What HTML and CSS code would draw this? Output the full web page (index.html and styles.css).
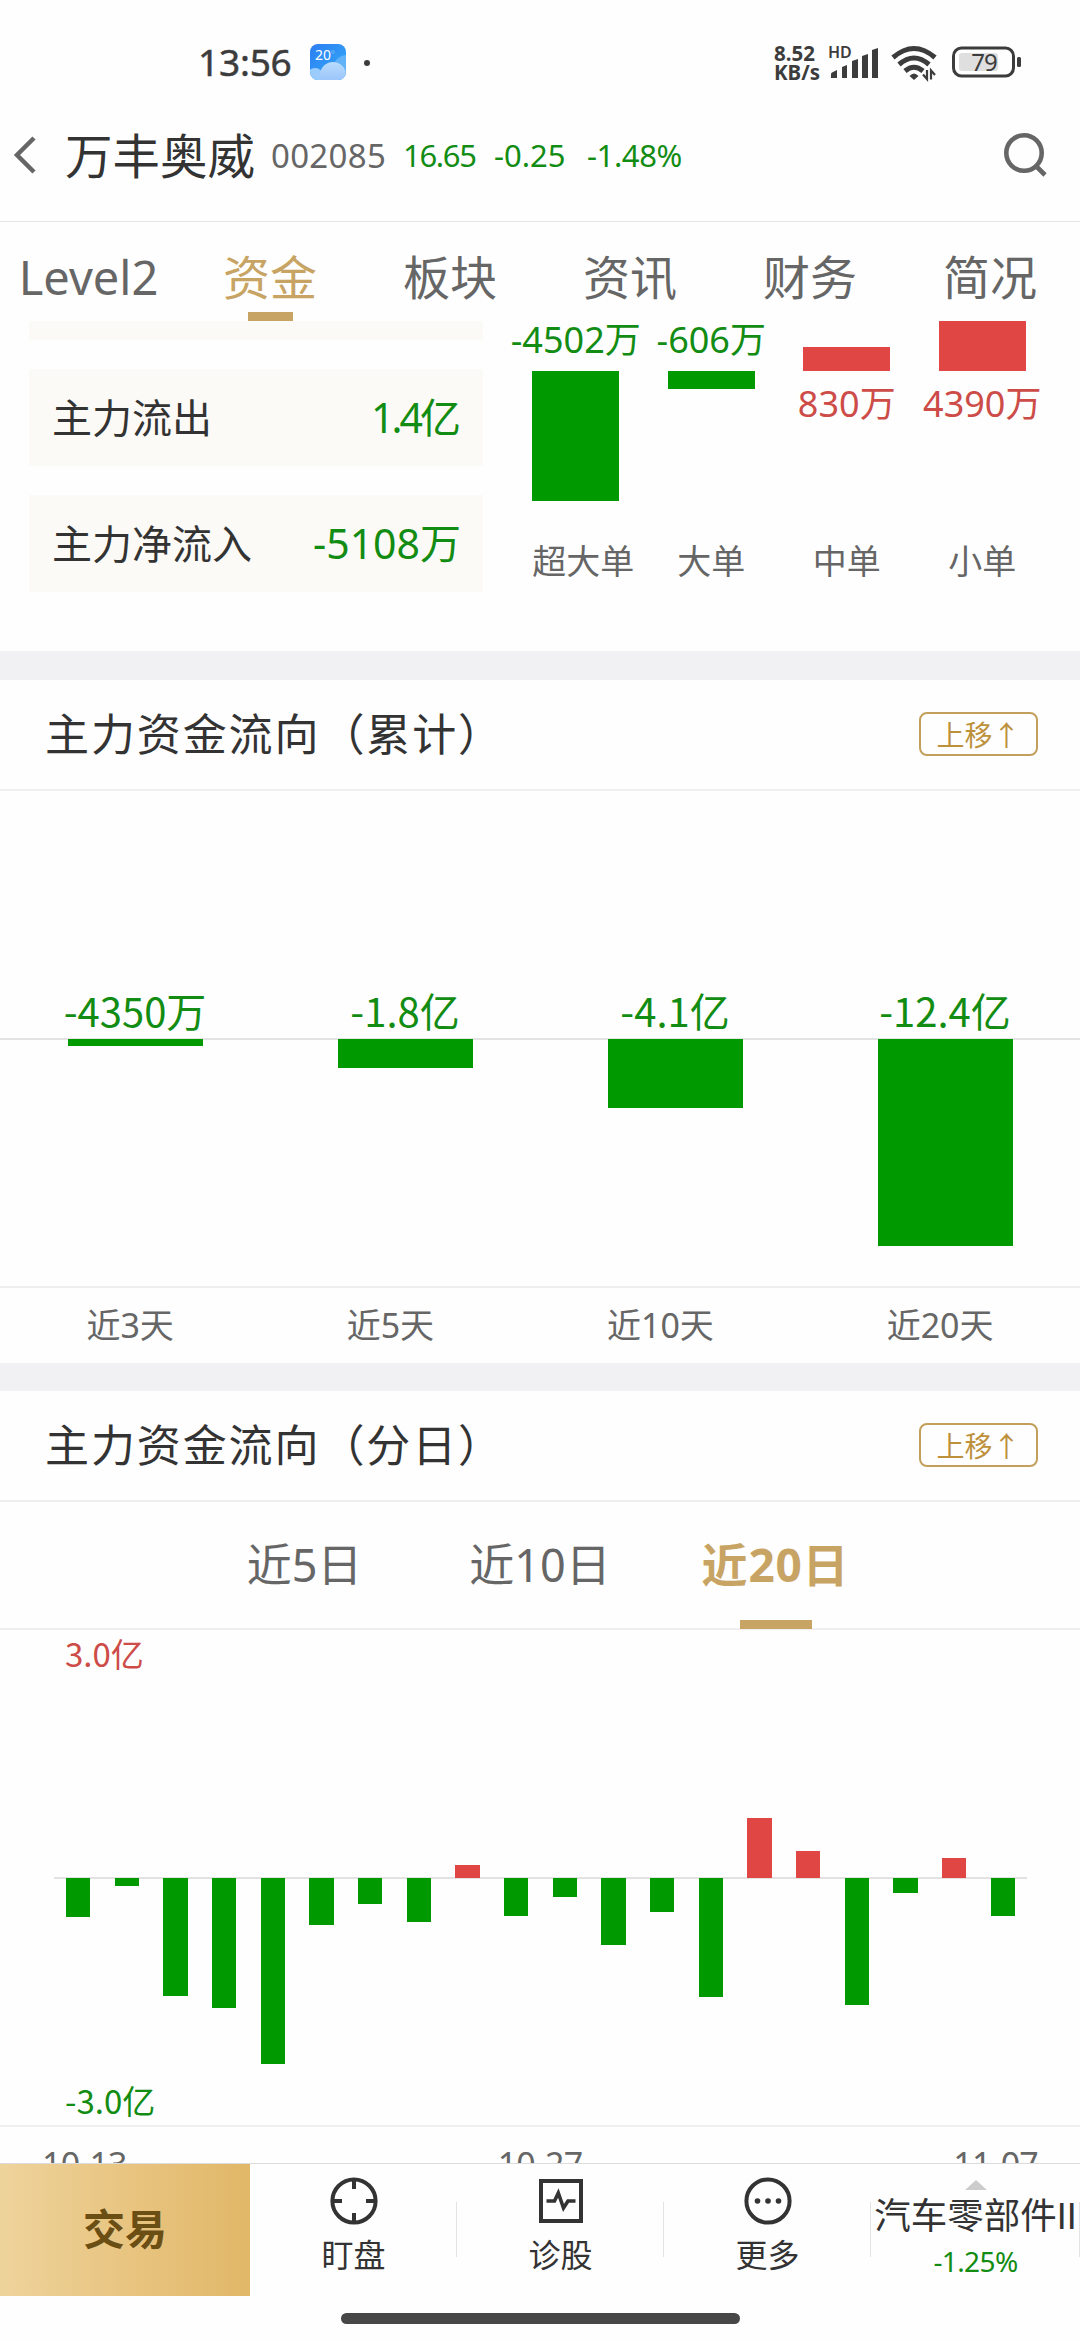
FILE: index.html
```html
<!DOCTYPE html>
<html lang="zh-CN">
<head>
<meta charset="utf-8">
<title>万丰奥威 002085</title>
<link rel="stylesheet" href="styles.css">
</head>
<body>
<div class="screen">
  <div class="status">
    <span class="clock">13:56</span>
    <svg class="weather" width="36" height="36" viewBox="0 0 36 36">
      <defs>
        <linearGradient id="sky" x1="0" y1="0" x2="1" y2="1"><stop offset="0" stop-color="#2c7df2"/><stop offset="1" stop-color="#35aef8"/></linearGradient>
        <linearGradient id="cloud" x1="0" y1="0" x2="0" y2="1"><stop offset="0" stop-color="#b9dcfd"/><stop offset="1" stop-color="#8fbcfa"/></linearGradient>
        <clipPath id="tile"><rect width="36" height="36" rx="8"/></clipPath>
      </defs>
      <g clip-path="url(#tile)">
        <rect width="36" height="36" fill="url(#sky)"/>
        <circle cx="37" cy="25" r="14" fill="#62b2f8"/>
        <circle cx="5" cy="32" r="8" fill="#9cccfc"/>
        <circle cx="23" cy="31" r="13" fill="url(#cloud)"/>
        <text x="5" y="16" class="weather-temp">20</text>
        <circle cx="23" cy="8" r="1.4" fill="none" stroke="#6fb8fb" stroke-width=".8"/>
      </g>
    </svg>
    <i class="dot"></i>
    <div class="speed"><span>8.52</span><span>KB/s</span></div>
    <svg class="signal" width="52" height="36" viewBox="0 0 52 36" fill="#3c3c3c">
      <text x="0" y="14" class="hd">HD</text>
      <path d="M3 34v-4q0-1 1-1.500l5-2.500v8zM14 34v-11l5-2v13zM24 34v-17l6-2v19zM34 34v-22l6-2v24zM44 34v-28l6-2v30z"/>
    </svg>
    <svg class="wifi" width="48" height="36" viewBox="0 0 48 36" fill="none" stroke="#3c3c3c" stroke-width="5">
      <path d="M3 13.500Q24-4.500 45 13.500M9 20.500Q24 7.500 39 20.500M15 27Q24 19.500 33 27"/>
      <path d="M19.500 32q4.500-5 9 0l-4.500 4z" fill="#3c3c3c" stroke="none"/>
      <path d="M37 26v9l-4-4.500M41 35.500v-9l4 4.500" stroke-width="2.200"/>
    </svg>
    <svg class="battery" width="70" height="32" viewBox="0 0 70 32">
      <rect x="7" y="7" width="39" height="18" rx="3" fill="#dfdfdf"/>
      <rect x="1.500" y="2" width="60" height="28" rx="8" fill="none" stroke="#3c3c3c" stroke-width="3"/>
      <rect x="65" y="11" width="4" height="10" rx="1.500" fill="#3c3c3c"/>
      <text x="32" y="25" class="charge">79</text>
    </svg>
  </div>

  <header class="topbar">
    <svg class="back" width="24" height="38" viewBox="0 0 24 38"><path d="M21 2 4 19l17 17" fill="none" stroke="#666" stroke-width="4.500"/></svg>
    <h1 class="name">万丰奥威</h1>
    <span class="code">002085</span>
    <span class="quote price">16.65</span>
    <span class="quote change">-0.25</span>
    <span class="quote pct">-1.48%</span>
    <svg class="search" width="46" height="46" viewBox="0 0 46 46" fill="none" stroke="#666" stroke-width="4.600"><circle cx="22" cy="21" r="17.700"/><path d="M34 34l9 9"/></svg>
  </header>

  <nav class="tabs">
    <span class="tab level">Level2</span><span class="tab active">资金</span><span class="tab">板块</span><span class="tab">资讯</span><span class="tab">财务</span><span class="tab">简况</span>
  </nav>

  <section class="summary">
    <div class="cards">
      <div class="card cut"></div>
      <div class="card"><span>主力流出</span><b class="tight">1.4亿</b></div>
      <div class="card"><span>主力净流入</span><b>-5108万</b></div>
    </div>
    <div class="orders">
      <div class="order down"><div class="up-zone"><span>-4502万</span></div><div class="low-zone"><i style="height:130px"></i></div><em class="wide">超大单</em></div>
      <div class="order down"><div class="up-zone"><span>-606万</span></div><div class="low-zone"><i style="height:18px"></i></div><em>大单</em></div>
      <div class="order up"><div class="up-zone"><i style="height:24px"></i></div><div class="low-zone"><span>830万</span></div><em>中单</em></div>
      <div class="order up"><div class="up-zone"><i style="height:50px"></i></div><div class="low-zone"><span>4390万</span></div><em>小单</em></div>
    </div>
  </section>

  <section class="block">
    <div class="head"><h2>主力资金流向（累计）</h2><button>上移↑</button></div>
    <div class="totals">
      <div class="total"><span>-4350万</span><i style="height:7px"></i></div>
      <div class="total"><span>-1.8亿</span><i style="height:29px"></i></div>
      <div class="total"><span>-4.1亿</span><i style="height:69px"></i></div>
      <div class="total"><span>-12.4亿</span><i style="height:207px"></i></div>
    </div>
    <div class="periods"><span>近3天</span><span>近5天</span><span>近10天</span><span>近20天</span></div>
  </section>

  <section class="block daily">
    <div class="head"><h2>主力资金流向（分日）</h2><button>上移↑</button></div>
    <div class="ranges"><span>近5日</span><span>近10日</span><span class="active">近20日</span></div>
    <div class="plot">
      <span class="max">3.0亿</span>
      <div class="bars">
        <div class="neg"><i style="height:39px"></i></div>
        <div class="neg"><i style="height:8px"></i></div>
        <div class="neg"><i style="height:118px"></i></div>
        <div class="neg"><i style="height:130px"></i></div>
        <div class="neg"><i style="height:186px"></i></div>
        <div class="neg"><i style="height:47px"></i></div>
        <div class="neg"><i style="height:26px"></i></div>
        <div class="neg"><i style="height:44px"></i></div>
        <div class="pos"><i style="height:13px"></i></div>
        <div class="neg"><i style="height:38px"></i></div>
        <div class="neg"><i style="height:19px"></i></div>
        <div class="neg"><i style="height:67px"></i></div>
        <div class="neg"><i style="height:34px"></i></div>
        <div class="neg"><i style="height:119px"></i></div>
        <div class="pos"><i style="height:60px"></i></div>
        <div class="pos"><i style="height:27px"></i></div>
        <div class="neg"><i style="height:127px"></i></div>
        <div class="neg"><i style="height:15px"></i></div>
        <div class="pos"><i style="height:20px"></i></div>
        <div class="neg"><i style="height:38px"></i></div>
      </div>
      <span class="min">-3.0亿</span>
    </div>
    <div class="dates"><span>10-13</span><span>10-27</span><span>11-07</span></div>
  </section>

  <footer class="dock">
    <div class="trade">交易</div>
    <div class="item">
      <svg width="48" height="48" viewBox="0 0 48 48" fill="none" stroke="#333" stroke-width="4"><circle cx="24" cy="24" r="21.600"/><path d="M24 2v10M24 36v10M2 24h10M36 24h10"/></svg>
      <span>盯盘</span>
    </div>
    <div class="item">
      <svg width="48" height="48" viewBox="0 0 48 48" fill="none" stroke="#333" stroke-width="4"><rect x="4" y="4" width="40" height="40"/><path d="M9.500 24h8l3.800-8 5.200 15 4.500-7h7.500" stroke-width="3.600"/></svg>
      <span>诊股</span>
    </div>
    <div class="item">
      <svg width="48" height="48" viewBox="0 0 48 48"><circle cx="24" cy="24" r="21.600" fill="none" stroke="#333" stroke-width="4"/><g fill="#333"><circle cx="13.500" cy="24" r="2.800"/><circle cx="24" cy="24" r="2.800"/><circle cx="34.500" cy="24" r="2.800"/></g></svg>
      <span>更多</span>
    </div>
    <div class="sector">
      <i class="caret"></i>
      <span class="sector-name">汽车零部件II</span>
      <span class="sector-pct">-1.25%</span>
    </div>
  </footer>
  <div class="home"><i></i></div>
</div>
</body>
</html>
```

FILE: styles.css
```css
* { box-sizing: border-box; margin: 0; padding: 0; }
body { background: #fefefe; font-family: "Noto Sans", "Noto Sans CJK SC", sans-serif; line-height: 1.2; color: #333; }
i, em { font-style: normal; display: block; }
svg { display: block; flex: none; overflow: visible; }
.screen { width: 1080px; height: 2340px; overflow: hidden; display: flex; flex-direction: column; background: #fefefe; white-space: nowrap; }

/* status bar */
.status { height: 100px; flex: none; display: flex; align-items: flex-start; padding: 44px 58px 0 198px; color: #3c3c3c; }
.clock { width: 112px; font-size: 37px; line-height: 36px; letter-spacing: -.2px; -webkit-text-stroke: .5px #3c3c3c; }
.weather-temp { font: 14px "Noto Sans", sans-serif; fill: #fff; }
.dot { width: 6px; height: 6px; border-radius: 3px; background: #3c3c3c; margin: 16px 0 0 18px; }
.speed { margin-left: auto; width: 54px; display: flex; flex-direction: column; font-size: 20.500px; font-weight: 700; line-height: 19px; }
.hd { font: 600 16px "Noto Sans", sans-serif; }
.wifi { margin-left: 10px; }
.battery { margin: 2px 0 0 14px; }
.charge { font: 24px "Noto Sans", sans-serif; letter-spacing: -1px; text-anchor: middle; fill: #3c3c3c; }

/* stock header */
.topbar { height: 122px; flex: none; display: flex; align-items: center; padding: 0 32px 11px 13px; border-bottom: 1px solid #e6e6e6; }
.name { font-size: 47.500px; font-weight: 400; margin-left: 28px; width: 206px; }
.code { font-size: 33px; letter-spacing: .3px; color: #666; width: 132px; padding-top: 1px; }
.quote { font-size: 31px; color: #128c12; padding-top: 2px; }
.price { width: 91px; letter-spacing: -1.3px; }
.change { width: 93px; }
.pct { letter-spacing: -.4px; }
.search { margin-left: auto; }

/* main tabs */
.tabs { height: 99px; flex: none; display: grid; grid-template: 99px / repeat(6, 180px); }
.tab { display: flex; flex-direction: column; align-items: center; font-size: 47px; line-height: 110px; color: #666; }
.tab.level { padding-right: 3px; }
.tab.active { color: #c8a464; }
.tab.active::after { content: ""; flex: none; width: 45px; height: 9px; background: #c8a464; margin-top: -20px; }

/* summary */
.summary { height: 330px; flex: none; display: flex; }
.cards { width: 508px; padding-left: 29px; display: flex; flex-direction: column; gap: 29px; }
.card { width: 454px; height: 97px; background: #fbfaf6; display: flex; align-items: center; justify-content: space-between; padding: 0 22px 0 23px; font-size: 40px; }
.card b { font-weight: 400; color: #128c12; font-size: 41px; }
.card .tight { letter-spacing: -3px; margin-right: 3px; }
.card.cut { height: 19px; }
.orders { display: grid; grid-template-columns: repeat(4, 135.5px); }
.order { display: flex; flex-direction: column; align-items: center; }
.order i { width: 87px; }
.order span { font-size: 36px; line-height: 38px; }
.up-zone { height: 50px; display: flex; flex-direction: column; justify-content: flex-end; }
.up-zone span { padding-bottom: 12px; }
.low-zone { height: 165px; }
.low-zone span { display: block; padding-top: 14px; }
.down { color: #128c12; }
.up { color: #cd4c48; }
.down i, .total i, .neg i { background: #009a00; }
.up i, .pos i { background: #e04644; }
.order em { font-size: 34px; line-height: 50px; color: #666; }
.order .wide { padding-left: 15px; }

/* fund flow blocks */
.block { flex: none; border-top: 29px solid #f1f1f4; }
.daily { border-top-width: 28px; }
.head { height: 111px; border-bottom: 2px solid #efefef; display: flex; align-items: center; justify-content: space-between; padding: 0 42px 0 45px; }
.head h2 { font-size: 44px; font-weight: 400; letter-spacing: 1.9px; }
.head button { width: 119px; height: 44px; border: 2px solid #c2a05c; border-radius: 8px; background: none; font: 28px/42px "Noto Sans", "Noto Sans CJK SC", sans-serif; color: #bd913c; margin-top: -1px; }
.totals { height: 497px; border-bottom: 2px solid #efefef; display: grid; grid-template-columns: repeat(4, 270px); background: linear-gradient(#e4e4e4, #e4e4e4) 0 247px / 100% 2px no-repeat; }
.total { display: flex; flex-direction: column; align-items: center; padding-top: 190px; }
.total span { font-family: "Noto Sans CJK SC", sans-serif; font-size: 40px; line-height: 58px; color: #128c12; }
.total i { width: 135px; }
.periods { height: 75px; display: flex; justify-content: space-around; font-size: 34px; line-height: 75px; color: #666; }
.ranges { height: 128px; border-bottom: 2px solid #efefef; display: grid; grid-template-columns: repeat(3, 235.5px); justify-content: center; text-align: center; font-size: 45px; line-height: 125px; color: #666; }
.ranges .active { position: relative; font-size: 46px; font-weight: 700; letter-spacing: .8px; color: #c8a464; }
.ranges .active::after { content: ""; position: absolute; left: 82px; top: 118px; width: 72px; height: 9px; background: #c8a464; }
.plot { height: 497px; border-bottom: 2px solid #efefef; display: flex; flex-direction: column; justify-content: space-between; padding: 0 53px 0 54px; font: 33px/46px "Noto Sans CJK SC", sans-serif; }
.max, .min { padding-left: 11px; }
.max { color: #cd4c48; height: 50px; }
.min { color: #128c12; height: 48px; }
.bars { height: 397px; display: grid; grid-template-columns: repeat(20, 1fr); background: linear-gradient(#e2e2e2, #e2e2e2) 0 197px / 100% 2px no-repeat; }
.bars div { height: 198px; display: flex; justify-content: center; }
.bars i { width: 24.3px; }
.bars .pos { align-items: flex-end; }
.bars .neg { align-items: flex-start; margin-top: 198px; }
.dates { height: 36px; overflow: hidden; display: flex; justify-content: space-between; padding: 14px 42px 0; font-size: 34px; letter-spacing: -.8px; line-height: 46px; color: #666; }

/* bottom dock */
.dock { height: 133px; flex: none; border-top: 1px solid #dcdcdc; display: grid; grid-template-columns: 250px repeat(3, 207px) 209px; background: #fefefe; }
.trade { background: linear-gradient(90deg, #eed39b, #e7c27c 60%, #e1b768); color: #6a4e14; font-size: 42px; font-weight: 700; line-height: 129px; text-align: center; }
.item { display: flex; flex-direction: column; align-items: center; padding-top: 13px; font-size: 32px; line-height: 59px; background: linear-gradient(#e3e3e3, #e3e3e3) 100% 38px / 1px 55px no-repeat; }
.sector { display: flex; flex-direction: column; align-items: center; padding: 16px 0 0; background: linear-gradient(#e3e3e3, #e3e3e3) 100% 38px / 1px 55px no-repeat; }
.caret { border: 11px solid transparent; border-top: 0; border-bottom: 10px solid #ccc; }
.sector-name { font-family: Roboto, "Noto Sans CJK SC", sans-serif; font-size: 36.500px; line-height: 54px; }
.sector-pct { font-size: 28px; line-height: 34px; letter-spacing: -.6px; color: #128c12; }
.home { height: 44px; flex: none; display: flex; justify-content: center; padding-top: 17px; }
.home i { width: 399px; height: 11px; border-radius: 6px; background: #474747; }
```
